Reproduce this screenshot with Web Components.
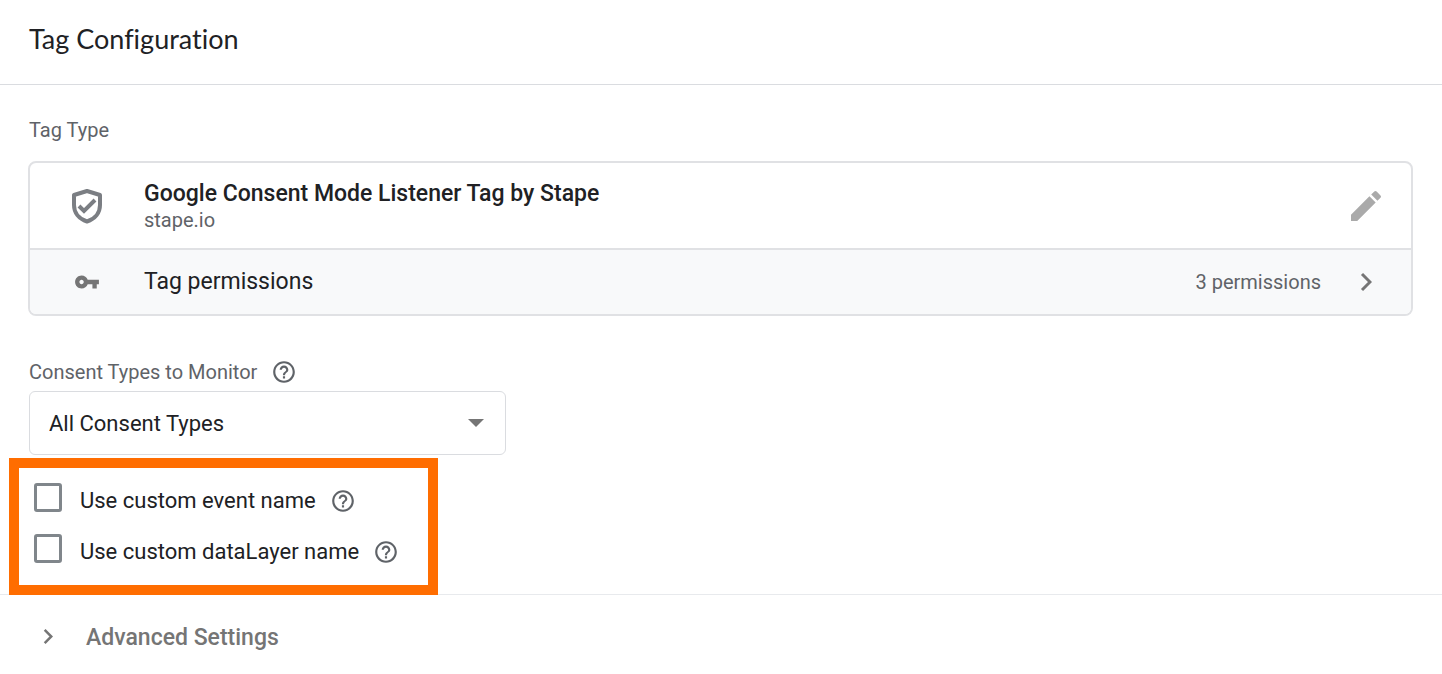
<!DOCTYPE html>
<html lang="en">
<head>
<meta charset="utf-8">
<title>Tag Configuration</title>
<style>
  body {
    margin: 0;
    background: #fff;
    color: #202124;
    font-family: Roboto, "Liberation Sans", sans-serif;
    font-size: 22px;
    line-height: 28px;
    --muted: #5f6368;
    --line: #dadce0;
    --card-line: #e0e1e4;
  }
</style>
</head>
<body>
<tag-configuration heading="Tag Configuration">
  <field-label>Tag Type</field-label>
  <tag-card name="Google Consent Mode Listener Tag by Stape" vendor="stape.io" permissions="3"></tag-card>
  <select-field label="Consent Types to Monitor" value="All Consent Types"></select-field>
  <highlight-box>
    <check-option label="Use custom event name"></check-option>
    <check-option label="Use custom dataLayer name"></check-option>
  </highlight-box>
  <settings-toggle slot="footer">Advanced Settings</settings-toggle>
</tag-configuration>

<script>
const CHEVRON = '<svg viewBox="0 0 12 20" aria-hidden="true"><path d="M2 2l8 8-8 8" fill="none" stroke="currentColor" stroke-width="3"/></svg>';

class TagConfiguration extends HTMLElement {
  constructor() {
    super();
    this.attachShadow({ mode: 'open' });
  }

  connectedCallback() {
    this.shadowRoot.innerHTML = `
      <style>
        :host { display: block; }
        header { padding: 23px 29px 29px; border-bottom: 1px solid var(--line); }
        h1 { margin: 0; font: 400 27px/32px Lato, Roboto, sans-serif; font-variant-ligatures: none; }
        .body { padding: 33px 29px 0; }
        footer { border-top: 1px solid #e8eaed; padding: 25px 29px; }
      </style>
      <header><h1>${this.getAttribute('heading')}</h1></header>
      <div class="body"><slot></slot></div>
      <footer><slot name="footer"></slot></footer>
    `;
  }
}

customElements.define('tag-configuration', TagConfiguration);

class FieldLabel extends HTMLElement {
  constructor() {
    super();
    this.attachShadow({ mode: 'open' });
    this.shadowRoot.innerHTML = `
      <style>
        :host { display: block; color: var(--muted); font-size: 20px; line-height: 24px; }
      </style>
      <slot></slot>
    `;
  }
}

customElements.define('field-label', FieldLabel);

class HelpButton extends HTMLElement {
  constructor() {
    super();
    this.attachShadow({ mode: 'open' });
    this.shadowRoot.innerHTML = `
      <style>
        :host { display: flex; color: var(--muted); }
        button { display: flex; padding: 0; border: 0; background: none; color: inherit; }
        svg { width: 26px; height: 26px; }
      </style>
      <button type="button" aria-label="Help">
        <svg viewBox="0 0 24 24" aria-hidden="true">
          <path fill="currentColor" d="M11 18h2v-2h-2v2zm1-16C6.48 2 2 6.48 2 12s4.48 10 10 10 10-4.480 10-10S17.520 2 12 2zm0 18c-4.410 0-8-3.590-8-8s3.590-8 8-8 8 3.590 8 8-3.590 8-8 8zm0-14c-2.210 0-4 1.790-4 4h2c0-1.100.9-2 2-2s2 .9 2 2c0 2-3 1.750-3 5h2c0-2.250 3-2.500 3-5 0-2.210-1.790-4-4-4z"/>
        </svg>
      </button>
    `;
  }
}

customElements.define('help-button', HelpButton);

class TagCard extends HTMLElement {
  constructor() {
    super();
    this.attachShadow({ mode: 'open' });
  }

  connectedCallback() {
    this.shadowRoot.innerHTML = `
      <style>
        :host { display: block; margin: 19px 0 43px -1px; border: 2px solid var(--card-line); border-radius: 8px; overflow: hidden; font-size: 23px; }
        .row { display: grid; grid-template-columns: 114px 1fr auto 90px; align-items: center; box-sizing: border-box; width: 100%; }
        .tag { min-height: 85px; }
        .link { min-height: 66px; padding: 0; border: 0; border-top: 2px solid var(--card-line); background: #f8f9fa; color: inherit; font: inherit; text-align: left; }
        .icon { display: flex; justify-content: center; color: #757575; }
        .name { font-weight: 500; }
        .vendor, .count { color: var(--muted); font-size: 20px; line-height: 24px; }
        .shield { width: 32px; height: 36px; }
        .key { width: 26px; height: 26px; }
        .edit { padding: 0; border: 0; background: none; color: #aaa; }
        .edit svg { width: 40px; height: 40px; }
        .arrow svg { width: 12px; height: 20px; }
      </style>
      <div class="row tag">
        <span class="icon">
          <svg class="shield" viewBox="0 0 32 36" fill="none" stroke="#7b7e83" aria-hidden="true">
            <path stroke-width="4" stroke-linejoin="round" d="M16 3L29 7v10c0 8-5 14-13 16.500C8 31 3 25 3 17V7z"/>
            <path stroke-width="4" d="M8 18l5 5 11-11"/>
          </svg>
        </span>
        <div>
          <div class="name">${this.getAttribute('name')}</div>
          <div class="vendor">${this.getAttribute('vendor')}</div>
        </div>
        <span></span>
        <button class="icon edit" type="button" aria-label="Edit tag type">
          <svg viewBox="0 0 24 24" aria-hidden="true"><path fill="currentColor" d="M3 17.250V21h3.750L17.810 9.940l-3.750-3.750L3 17.250zM20.710 7.040a1 1 0 0 0 0-1.410l-2.340-2.340a1 1 0 0 0-1.410 0l-1.830 1.830 3.750 3.750 1.830-1.830z"/></svg>
        </button>
      </div>
      <button class="row link" type="button">
        <span class="icon">
          <svg class="key" viewBox="0 0 24 24" aria-hidden="true"><path fill="currentColor" d="M12.650 10C11.830 7.670 9.610 6 7 6c-3.310 0-6 2.690-6 6s2.690 6 6 6c2.610 0 4.830-1.670 5.650-4H17v4h4v-4h2v-4H12.650zM7 14c-1.100 0-2-.9-2-2s.9-2 2-2 2 .9 2 2-.9 2-2 2z"/></svg>
        </span>
        <span>Tag permissions</span>
        <span class="count">${this.getAttribute('permissions')} permissions</span>
        <span class="icon arrow">${CHEVRON}</span>
      </button>
    `;
  }
}

customElements.define('tag-card', TagCard);

class SelectField extends HTMLElement {
  constructor() {
    super();
    this.attachShadow({ mode: 'open' });
  }

  connectedCallback() {
    this.shadowRoot.innerHTML = `
      <style>
        :host { display: block; }
        .label { display: flex; align-items: center; gap: 14px; color: var(--muted); font-size: 20px; line-height: 24px; }
        .box { display: grid; align-items: center; max-width: 477px; margin-top: 6px; }
        select, .caret { grid-area: 1 / 1; }
        select { appearance: none; box-sizing: border-box; height: 64px; width: 100%; padding: 2px 48px 0 19px; border: 1px solid var(--line); border-radius: 6px; background: #fff; color: inherit; font: inherit; }
        .caret { justify-self: end; width: 16px; height: 8px; margin-right: 22px; pointer-events: none; }
      </style>
      <div class="label"><label for="choice">${this.getAttribute('label')}</label><help-button></help-button></div>
      <div class="box">
        <select id="choice"><option>${this.getAttribute('value')}</option></select>
        <svg class="caret" viewBox="0 0 16 8" aria-hidden="true"><path fill="#757575" d="M0 0h16L8 8z"/></svg>
      </div>
    `;
  }
}

customElements.define('select-field', SelectField);

class HighlightBox extends HTMLElement {
  constructor() {
    super();
    this.attachShadow({ mode: 'open' });
    // The frame overlaps the footer rule by one pixel
    this.shadowRoot.innerHTML = `
      <style>
        :host { display: flex; flex-direction: column; gap: 21px; box-sizing: border-box; position: relative; max-width: 429px; margin: 3px 0 -1px -20px; padding: 14px 15px 22px; border: 10px solid #ff6d00; }
      </style>
      <slot></slot>
    `;
  }
}

customElements.define('highlight-box', HighlightBox);

class CheckOption extends HTMLElement {
  constructor() {
    super();
    this.attachShadow({ mode: 'open' });
  }

  connectedCallback() {
    this.shadowRoot.innerHTML = `
      <style>
        :host { display: flex; align-items: center; height: 30px; }
        input { appearance: none; box-sizing: border-box; width: 28px; height: 29px; margin: 0 18px 0 0; border: 3px solid #80868b; border-radius: 3px; }
        input:checked { background: #80868b; }
        .text { display: flex; align-items: center; gap: 14px; padding-top: 7px; }
      </style>
      <input type="checkbox" id="check">
      <div class="text"><label for="check">${this.getAttribute('label')}</label><help-button></help-button></div>
    `;
  }
}

customElements.define('check-option', CheckOption);

class SettingsToggle extends HTMLElement {
  constructor() {
    super();
    this.attachShadow({ mode: 'open' });
    this.shadowRoot.innerHTML = `
      <style>
        :host { display: block; color: #757575; font-size: 23px; }
        button { display: flex; align-items: center; gap: 33px; padding: 0 0 0 14px; border: 0; background: none; color: inherit; font: inherit; font-weight: 500; }
        svg { width: 10px; height: 17px; }
        span { padding-top: 4px; }
      </style>
      <button type="button" aria-expanded="false">${CHEVRON}<span><slot></slot></span></button>
    `;
  }
}

customElements.define('settings-toggle', SettingsToggle);
</script>
</body>
</html>
